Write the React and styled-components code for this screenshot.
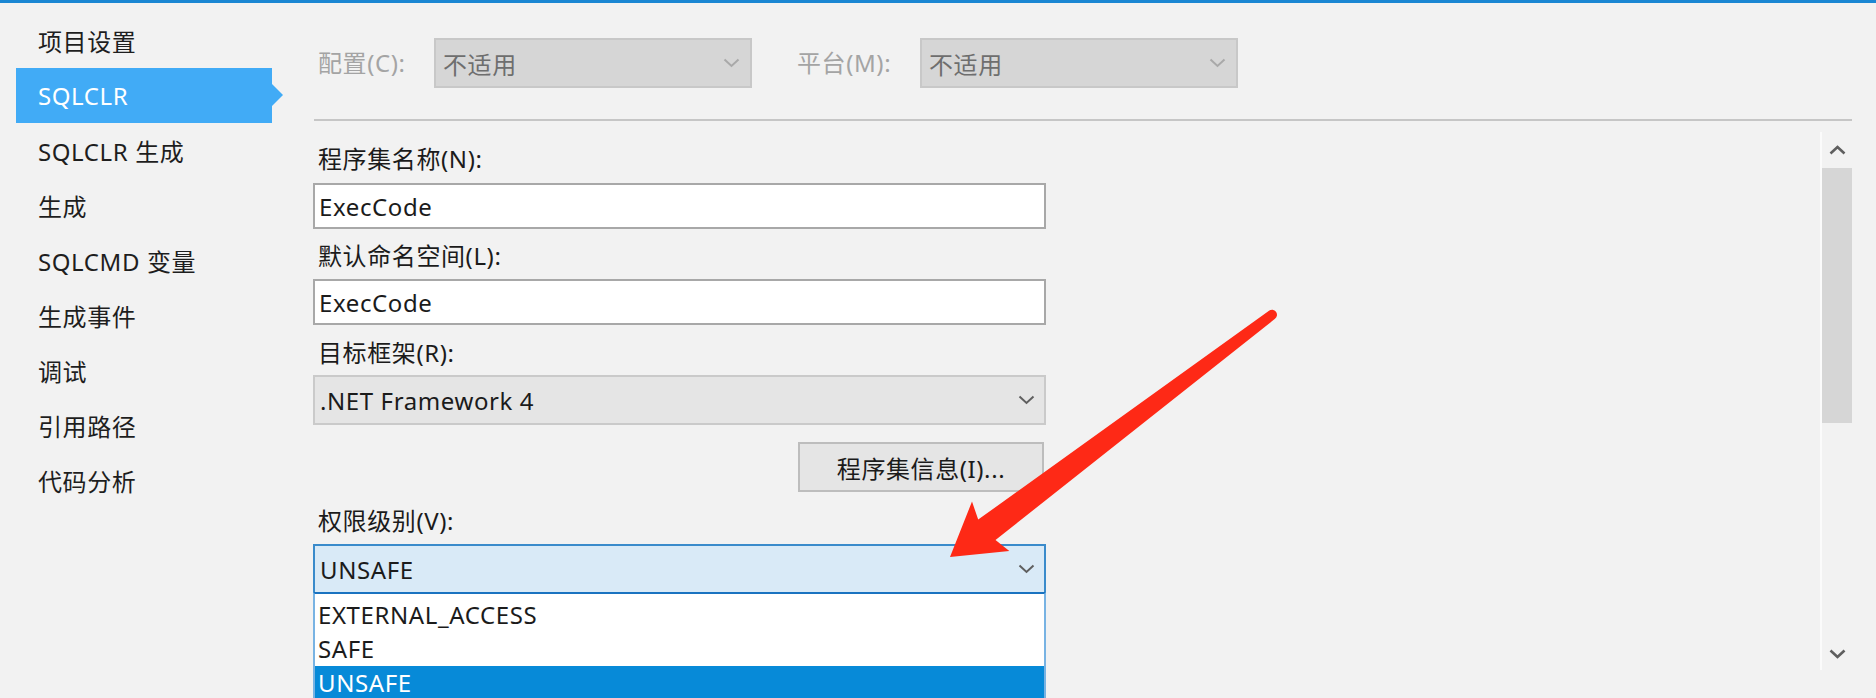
import React from 'react';
import styled, { createGlobalStyle } from 'styled-components';

const opciones = [
    '项目设置',
    'SQLCLR',
    'SQLCLR 生成',
    '生成',
    'SQLCMD 变量',
    '生成事件',
    '调试',
    '引用路径',
    '代码分析',
];

const permisos = ['EXTERNAL_ACCESS', 'SAFE', 'UNSAFE'];

const Flecha = ({ color = '#5f5f5f', arriba = false, grosor = 2 }) => (
    <svg width="17" height="10" viewBox="0 0 17 10">
        <polyline
            points={arriba ? '1.5,8.5 8.5,2 15.5,8.5' : '1.5,1.5 8.5,8 15.5,1.5'}
            fill="none"
            stroke={color}
            strokeWidth={grosor}
        />
    </svg>
);

const App = () => {
    return (
        <>
            <GlobalStyle />
            <Pagina>
                <Franja />
                <Cuerpo>
                    <Menu>
                        {opciones.map((texto, i) => (
                            <Opcion key={texto} $activa={i === 1}>{texto}</Opcion>
                        ))}
                    </Menu>

                    <Contenido>
                        <FilaSuperior>
                            <EtiquetaGris $ancho={116}>配置(C):</EtiquetaGris>
                            <ComboDeshabilitado>
                                不适用
                                <Flecha color="#a9a9a9" />
                            </ComboDeshabilitado>
                            <EtiquetaGris $ancho={123} $margen={45}>平台(M):</EtiquetaGris>
                            <ComboDeshabilitado>
                                不适用
                                <Flecha color="#a9a9a9" />
                            </ComboDeshabilitado>
                        </FilaSuperior>

                        <Separador />

                        <ZonaScroll>
                            <Formulario>
                                <Etiqueta $margen={16}>程序集名称(N):</Etiqueta>
                                <CajaTexto $margen={9}>ExecCode</CajaTexto>

                                <Etiqueta $margen={12}>默认命名空间(L):</Etiqueta>
                                <CajaTexto $margen={8}>ExecCode</CajaTexto>

                                <Etiqueta $margen={13}>目标框架(R):</Etiqueta>
                                <Combo $margen={7}>
                                    .NET Framework 4
                                    <Flecha />
                                </Combo>

                                <FilaBoton>
                                    <Boton>程序集信息(I)...</Boton>
                                </FilaBoton>

                                <Etiqueta $margen={14}>权限级别(V):</Etiqueta>
                                <Combo $margen={8} $abierto>
                                    UNSAFE
                                    <Flecha />
                                    <Lista>
                                        {permisos.map((p) => (
                                            <Elemento key={p} $elegido={p === 'UNSAFE'}>{p}</Elemento>
                                        ))}
                                    </Lista>
                                </Combo>
                            </Formulario>

                            <Barra>
                                <BotonBarra $alto={36}><Flecha arriba grosor={2.6} /></BotonBarra>
                                <Pulgar />
                                <Relleno />
                                <BotonBarra $alto={32}><Flecha grosor={2.6} /></BotonBarra>
                            </Barra>
                        </ZonaScroll>
                    </Contenido>
                </Cuerpo>

                <Marca width="1876" height="698" viewBox="0 0 1876 698">
                    <path
                        d="M950 557 L972 501.5 L978.2 519.6 L1269 310.8 A5 5 0 0 1 1275 318.8 L995.5 540 L1009.3 551.1 Z"
                        fill="#fe2916"
                    />
                </Marca>
            </Pagina>
        </>
    );
}

const GlobalStyle = createGlobalStyle`
    html, body {
        margin: 0;
        padding: 0;
        background: #f2f2f2;
    }
    body {
        font-family: "Noto Sans", "Noto Sans CJK SC", sans-serif;
        font-size: 24px;
        letter-spacing: 0.6px;
        color: #1b1b1b;
        overflow: hidden;
    }
`;

const Pagina = styled.div`
    position: relative;
    width: 1876px;
    height: 698px;
    display: flex;
    flex-direction: column;
    overflow: hidden;
    background: #f2f2f2;
`;

const Franja = styled.div`
    height: 3px;
    background: #1b87d3;
    flex-shrink: 0;
`;

const Cuerpo = styled.div`
    flex: 1;
    display: flex;
`;

const Menu = styled.nav`
    width: 283px;
    flex-shrink: 0;
    padding-top: 10px;
`;

const Opcion = styled.div`
    position: relative;
    width: 256px;
    height: 55px;
    margin-left: 16px;
    padding-left: 22px;
    box-sizing: border-box;
    display: flex;
    align-items: center;
    background: ${p => p.$activa ? '#41abf6' : 'transparent'};
    color: ${p => p.$activa ? '#fff' : '#1e1e1e'};

    &::after {
        content: '';
        display: ${p => p.$activa ? 'block' : 'none'};
        position: absolute;
        right: -11px;
        top: 16px;
        border-left: 11px solid #41abf6;
        border-top: 11.5px solid transparent;
        border-bottom: 11.5px solid transparent;
    }
`;

const Contenido = styled.main`
    flex: 1;
    display: flex;
    flex-direction: column;
    padding: 35px 24px 0 30px;
`;

const FilaSuperior = styled.div`
    display: flex;
    align-items: center;
    height: 50px;
    padding-left: 5px;
`;

const EtiquetaGris = styled.span`
    width: ${p => p.$ancho}px;
    margin-left: ${p => p.$margen || 0}px;
    color: #a4a4a4;
    line-height: 30px;
`;

const ComboDeshabilitado = styled.div`
    width: 318px;
    height: 50px;
    box-sizing: border-box;
    display: flex;
    align-items: center;
    justify-content: space-between;
    padding: 0 10px 0 7px;
    background: #d6d6d6;
    border: 2px solid #c8c8c8;
    color: #6e6e6e;
`;

const Separador = styled.div`
    height: 2px;
    margin: 31px 0 0 1px;
    background: #c6c6c6;
`;

const ZonaScroll = styled.div`
    display: flex;
    height: 542px;
    margin-top: 7px;
`;

const Formulario = styled.div`
    flex: 1;
    display: flex;
    flex-direction: column;
`;

const Etiqueta = styled.label`
    line-height: 30px;
    padding-left: 5px;
    margin-top: ${p => p.$margen}px;
`;

const CajaTexto = styled.div`
    width: 733px;
    height: 46px;
    margin-top: ${p => p.$margen}px;
    box-sizing: border-box;
    display: flex;
    align-items: center;
    padding-left: 4px;
    background: #fff;
    border: 2px solid #a8a8a8;
`;

const Combo = styled.div`
    position: relative;
    width: 733px;
    height: 50px;
    margin-top: ${p => p.$margen}px;
    box-sizing: border-box;
    display: flex;
    align-items: center;
    justify-content: space-between;
    padding: 0 9px 0 5px;
    background: ${p => p.$abierto ? '#d9eaf7' : '#e5e5e5'};
    border: 2px solid ${p => p.$abierto ? '#3a8bcb' : '#cacaca'};
`;

const Lista = styled.ul`
    position: absolute;
    top: 100%;
    left: -2px;
    width: 733px;
    margin: 0;
    padding: 4px 0 0;
    box-sizing: border-box;
    list-style: none;
    background: #fff;
    border-left: 2px solid #78b3e3;
    border-right: 2px solid #78b3e3;
    border-top: 2px solid #1a73c0;
`;

const Elemento = styled.li`
    height: 34px;
    line-height: 34px;
    padding-left: 3px;
    background: ${p => p.$elegido ? '#078ad8' : 'transparent'};
    color: ${p => p.$elegido ? '#fff' : '#1b1b1b'};
`;

const FilaBoton = styled.div`
    width: 733px;
    display: flex;
    justify-content: flex-end;
    margin-top: 17px;
`;

const Boton = styled.button`
    width: 246px;
    height: 50px;
    margin-right: 2px;
    box-sizing: border-box;
    background: #e5e5e5;
    border: 2px solid #bdbdbd;
    font: inherit;
    letter-spacing: inherit;
    color: #1b1b1b;
    padding: 0;
`;

const Barra = styled.div`
    width: 32px;
    margin-top: 4px;
    box-sizing: border-box;
    border-left: 2px solid #fbfbfb;
    display: flex;
    flex-direction: column;
`;

const BotonBarra = styled.div`
    height: ${p => p.$alto}px;
    display: flex;
    align-items: center;
    justify-content: center;
`;

const Pulgar = styled.div`
    height: 255px;
    background: #d6d6d6;
`;

const Relleno = styled.div`
    flex: 1;
`;

const Marca = styled.svg`
    position: absolute;
    top: 0;
    left: 0;
    pointer-events: none;
`;

export default App;
